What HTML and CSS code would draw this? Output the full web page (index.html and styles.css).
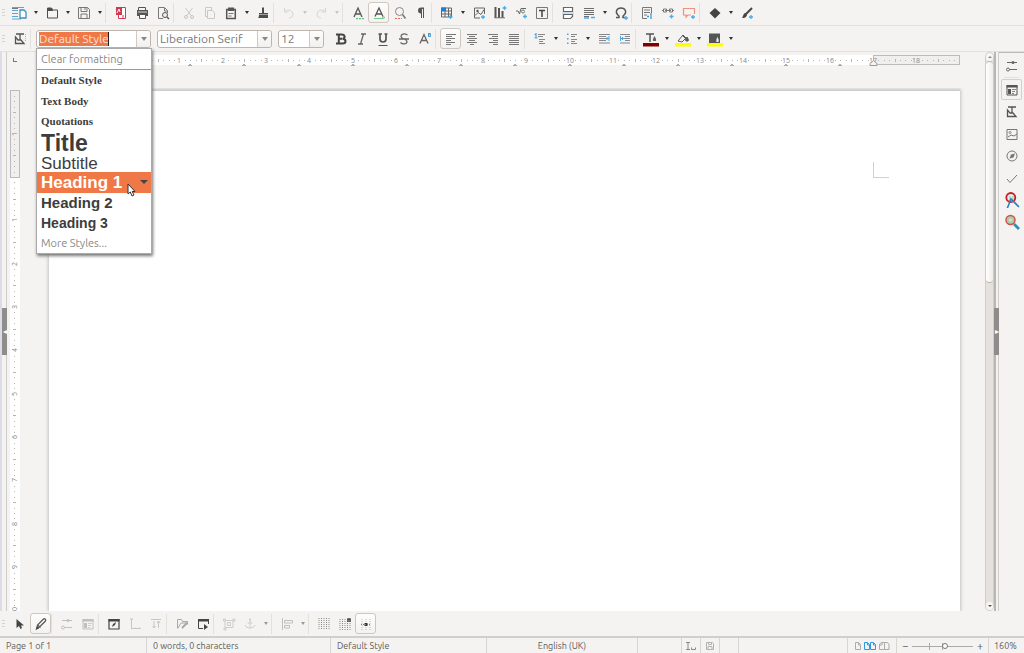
FILE: index.html
```html
<!DOCTYPE html>
<html lang="en">
<head>
<meta charset="utf-8">
<title>Untitled 1 - Writer</title>
<link rel="stylesheet" href="styles.css">
</head>
<body>
<svg class="defs" aria-hidden="true">
  <symbol id="new" viewBox="0 0 16 16"><path d="M0 2.5h12M0 5.5h6M0 8.5h6M0 11.5h6M0 14h9" stroke="#5aa7cf" fill="none"/><path d="M0 3.5h6" stroke="#777"/><path d="M8 5h4l2 2v6H8z" fill="#fff" stroke="#3f8fbc" stroke-width="1.3"/></symbol>
  <symbol id="open" viewBox="0 0 16 16"><path d="M3.5 13V3h4l1 2h5v8z" fill="none" stroke="#4d4d4d"/><path d="M3 3h5l1 3H3z" fill="#4d4d4d"/></symbol>
  <symbol id="save" viewBox="0 0 16 16"><path d="M2.500 2.500h9l2 2v9h-11zM5 2.500v4h6v-4M5 13v-4h6v4M9 3v2" fill="none" stroke="#777"/></symbol>
  <symbol id="pdf" viewBox="0 0 16 16"><path d="M8 2.500h4.500v11h-7V10" fill="#fff" stroke="#d2385a"/><path d="M3 2h6v8H3z" fill="#d2384f"/><path d="M4 8l2-4 1 3" stroke="#fff" fill="none"/><path d="M10 10v3" stroke="#d2384f"/></symbol>
  <symbol id="print" viewBox="0 0 16 16"><path d="M4.500 5V2.500h7V5" fill="none" stroke="#555"/><path d="M3 5h11v6H3z" fill="#555"/><path d="M5.500 9.500h6v4h-6z" fill="#fff" stroke="#555"/><path d="M4 7h9" stroke="#ddd"/></symbol>
  <symbol id="preview" viewBox="0 0 16 16"><path d="M8 13.500H3.500v-11h6l3 3V8M9.500 3v3h3" fill="none" stroke="#777"/><circle cx="10" cy="10" r="2.500" fill="#eee" stroke="#555"/><path d="M12 12l2 2" stroke="#555" stroke-width="1.500"/></symbol>
  <symbol id="cut" viewBox="0 0 16 16"><path d="M4.500 3l6 8M11.500 3l-6 8" fill="none" stroke="#c9c7c5"/><circle cx="5" cy="12" r="1.500" fill="none" stroke="#c9c7c5"/><circle cx="11" cy="12" r="1.500" fill="none" stroke="#c9c7c5"/></symbol>
  <symbol id="copy" viewBox="0 0 16 16"><path d="M5 11.500H3.500v-9h6V5M5.500 5.500h5l2 2v6h-7z" fill="none" stroke="#cbc9c7"/></symbol>
  <symbol id="paste" viewBox="0 0 16 16"><path d="M3.700 4.500h8.600v9H3.700z" fill="none" stroke="#555" stroke-width="1.500"/><path d="M5 2.500h6V6H5z" fill="#555"/><path d="M5.500 8.500h5M5.500 11h3" stroke="#777"/></symbol>
  <symbol id="brush" viewBox="0 0 16 16"><path d="M7 2.500h2V8h4v5H3c1-1 1-2 1-5h3z" fill="#4d4d4d"/><path d="M4 9.500h9" stroke="#ddd" stroke-width=".6"/></symbol>
  <symbol id="undo" viewBox="0 0 16 16"><path d="M3.500 3v4h4M4 6.500c3-3 8-1 8 3 0 2-2 3.500-4 3.500" fill="none" stroke="#d6d4d2"/></symbol>
  <symbol id="redo" viewBox="0 0 16 16"><path d="M12.500 3v4h-4M12 6.500C9 3.500 4 5.500 4 9.500c0 2 2 3.500 4 3.500" fill="none" stroke="#d6d4d2"/></symbol>
  <symbol id="spell" viewBox="0 0 16 16"><path d="M4 12l4-9 4 9M5.500 9h5" fill="none" stroke="#555" stroke-width="1.300"/><path d="M6 13.700h8" stroke="#3db665" stroke-dasharray="2 1"/></symbol>
  <symbol id="autospell" viewBox="0 0 16 16"><path d="M4 11.500l4-8.500 4 8.500M5.500 9h5" fill="none" stroke="#555" stroke-width="1.300"/><path d="M3 13.500h8l1-2 2 1-2 1z" fill="none" stroke="#77c791"/></symbol>
  <symbol id="find" viewBox="0 0 16 16"><circle cx="7.500" cy="6.500" r="4" fill="none" stroke="#888"/><path d="M10.500 9.500l3 4" stroke="#777" stroke-width="1.500"/><path d="M3 13.500h7" stroke="#e66d60" stroke-dasharray="2 1"/></symbol>
  <symbol id="pilcrow" viewBox="0 0 16 16"><path d="M8 13V8.500a3 3 0 010-6h3V13h-1V4H9v9z" fill="#555"/></symbol>
  <symbol id="table" viewBox="0 0 16 16"><path d="M2.500 3h10v9h-10zM2.500 6h10M2.500 9h10M6 3v9M9.500 3v9" fill="none" stroke="#666"/><path d="M2 2.500h5V6H2z" fill="#1c7fd0"/><path d="M11.500 10v4M9.500 12h4" stroke="#4caceb" stroke-width="1.300"/></symbol>
  <symbol id="image" viewBox="0 0 16 16"><path d="M9 13H3.500V3h10v6M4 10.500l3-3 3 2 3-5" fill="none" stroke="#666"/><circle cx="6.500" cy="6" r="1.200" fill="#555"/><path d="M12 10v4M10 12h4" stroke="#4caceb" stroke-width="1.300"/></symbol>
  <symbol id="chart" viewBox="0 0 16 16"><path d="M3.500 2v11M7 3v10M10.500 6v7" fill="none" stroke="#555" stroke-width="2"/><path d="M2.500 12.800H13" stroke="#777"/><path d="M12.500 1v4M10.500 3h4" stroke="#4caceb" stroke-width="1.300"/></symbol>
  <symbol id="formula" viewBox="0 0 16 16"><path d="M3 6h2l1.500 3L8 3.500h5" fill="none" stroke="#666"/><circle cx="10" cy="6.500" r="1.500" fill="none" stroke="#777"/><path d="M12 9.500v4M10 11.500h4" stroke="#4caceb" stroke-width="1.300"/></symbol>
  <symbol id="textbox" viewBox="0 0 16 16"><path d="M2.500 2.500h11v11h-11z" fill="none" stroke="#777"/><path d="M5 5.500h6M8 5.500v6.500" stroke="#444" stroke-width="1.500"/></symbol>
  <symbol id="break" viewBox="0 0 16 16"><path d="M3.500 2.500h9v4h-9zM3.500 9.500h9v2l-2 2h-7z" fill="#fff" stroke="#666" stroke-width="1.200"/><path d="M2 8h12" stroke="#9dccE9"/></symbol>
  <symbol id="field" viewBox="0 0 16 16"><path d="M3 3.500h10M3 5.500h10M3 7.500h10M3 9.500h10M3 11.500h5" stroke="#6d6d6d"/><path d="M3 13h5M10 12.500h4" stroke="#4caceb" stroke-width="1.300"/></symbol>
  <symbol id="omega" viewBox="0 0 16 16"><path d="M3 12.500h3V11C1 7 4 3 8 3s7 4 2 8v1.500h2" fill="none" stroke="#555" stroke-width="1.500"/><path d="M13 11v4M11 13h4" stroke="#4caceb" stroke-width="1.300"/></symbol>
  <symbol id="footnote" viewBox="0 0 16 16"><path d="M8 13.500H3.500v-11h9V8M5 5h6M5 7.500h6M5 10h3" fill="none" stroke="#777"/><path d="M8 11.500h2M12 8v6" stroke="#3998df" stroke-width="1.300"/></symbol>
  <symbol id="link" viewBox="0 0 16 16"><path d="M3.500 4h3v3h-3zM9.500 4h3v3h-3zM5 5.500h6M2 5.500h1M13 5.500h1" fill="none" stroke="#777"/><path d="M11.500 9.500v4M9.500 11.500h4" stroke="#4caceb" stroke-width="1.300"/></symbol>
  <symbol id="comment" viewBox="0 0 16 16"><path d="M13.500 9V3.500h-11v6.500H5v2l2-2h3" fill="none" stroke="#ee927a" stroke-width="1.200"/><path d="M12 10v4M10 12h4" stroke="#4caceb" stroke-width="1.300"/></symbol>
  <symbol id="diamond" viewBox="0 0 16 16"><path d="M8 3l5.500 5L8 13.500 2.500 8z" fill="#444"/></symbol>
  <symbol id="draw" viewBox="0 0 16 16"><path d="M6 10l7-7" stroke="#444" stroke-width="2"/><path d="M6 8l2 2c-1 3-3 3-5 3 1-1 1-4 3-5z" fill="#444"/><path d="M12 10v4M10 12h4" stroke="#4caceb" stroke-width="1.300"/></symbol>
  <symbol id="styles" viewBox="0 0 16 16"><path d="M4 3h8M8 3v6M3.500 6v6.500h8.500L9 9H6z" fill="none" stroke="#555" stroke-width="1.300"/></symbol>
  <symbol id="dots" viewBox="0 0 16 16"><path d="M13.500 3v7" stroke="#f0a08a" stroke-dasharray="1 1"/></symbol>
  <symbol id="bold" viewBox="0 0 16 16"><path d="M3 3.500h5.500c4 0 4 4 1 4.200 4 .3 4 4.800 0 4.800H3M5.800 3.500v9M6 7.700h3" fill="none" stroke="#444" stroke-width="2"/></symbol>
  <symbol id="italic" viewBox="0 0 16 16"><path d="M7 3h5M4 13h5M9.500 3l-3 10" fill="none" stroke="#666" stroke-width="1.300"/></symbol>
  <symbol id="underline" viewBox="0 0 16 16"><path d="M3.500 3H7M9.500 3h3M5 3v5c0 4 6 4 6 0V3" fill="none" stroke="#555" stroke-width="1.700"/><path d="M3.500 14.500h9" stroke="#555"/></symbol>
  <symbol id="strike" viewBox="0 0 16 16"><path d="M11.500 4C8 2 5 3 5 5.500S11 8 11 10.500 7 14 4.500 11.500M3 8h10" fill="none" stroke="#666" stroke-width="1.300"/></symbol>
  <symbol id="super" viewBox="0 0 16 16"><path d="M3 12.500l4-9 4 9M4.500 9.500h5" fill="none" stroke="#666" stroke-width="1.300"/><path d="M11.500 2v4M11.500 2.500h2v1.300h-2M11.500 5.500h2V4" fill="none" stroke="#4a9ddd"/></symbol>
  <symbol id="left" viewBox="0 0 16 16"><path d="M3 3.500h10M3 5.500h6M3 7.500h9M3 9.500h5M3 11.500h9M3 13.500h5" stroke="#777"/></symbol>
  <symbol id="center" viewBox="0 0 16 16"><path d="M3 3.500h10M5 5.500h6M3 7.500h10M5 9.500h6M3 11.500h10M6 13.500h4" stroke="#777"/></symbol>
  <symbol id="right" viewBox="0 0 16 16"><path d="M3 3.500h10M7 5.500h6M4 7.500h9M8 9.500h5M4 11.500h9M8 13.500h5" stroke="#777"/></symbol>
  <symbol id="justify" viewBox="0 0 16 16"><path d="M3 3.500h10M3 5.500h10M3 7.500h10M3 9.500h10M3 11.500h10M3 13.500h10" stroke="#777"/></symbol>
  <symbol id="numbers" viewBox="0 0 16 16"><path d="M6 3.500h7M6 5.500h5M7 8.500h6M7 10.500h4M7 12.500h6" stroke="#888"/><path d="M4 2v5M2.500 3.500H4M2.500 7h3" stroke="#4ca3df" stroke-width="1.200" fill="none"/></symbol>
  <symbol id="bullets" viewBox="0 0 16 16"><path d="M7 3.500h6M7 5.500h4M7 8.500h6M7 10.500h4M7 12.500h6" stroke="#888"/><path d="M3 2.500h1.500v1.500H3zM3 7h1.500v1.500H3zM3 11.500h1.500v1.500H3z" fill="#4ca3df"/></symbol>
  <symbol id="indent" viewBox="0 0 16 16"><path d="M3 3.500h11M3 5.500h7M3 7.500h6M3 9.500h7M3 12h11" stroke="#888"/><path d="M13 5v5M9 7.500h4M11 6v3" stroke="#4ca3df"/></symbol>
  <symbol id="outdent" viewBox="0 0 16 16"><path d="M3 3.500h10M8 5.500h5M8 7.500h5M8 9.500h5M3 12h10" stroke="#888"/><path d="M3.500 5v5M4 7.500h4M5.500 6v3" stroke="#4ca3df"/></symbol>
  <symbol id="fontcolor" viewBox="0 0 16 16"><path d="M3 3h8M7 3v8" stroke="#555" stroke-width="1.500"/><path d="M11.500 5c1 2 2 3 1.500 5h-3c-.5-2 .5-3 1.500-5z" fill="#666"/><path d="M0 12h16v3.500H0z" fill="#800000"/></symbol>
  <symbol id="highlight" viewBox="0 0 16 16"><path d="M3 10l5-6 3 3-4 4z" fill="none" stroke="#555"/><path d="M7 4l4 4M12 6c1 2 2 3 1 4h-2c-1-1 0-2 1-4z" fill="#555" stroke="#555"/><path d="M0 12h16v3.500H0z" fill="#ff0"/></symbol>
  <symbol id="parabg" viewBox="0 0 16 16"><path d="M2 2.500h11V12H2z" fill="#555"/><path d="M10.500 6c1 2 1.500 3 1 5h-2c-.5-2 0-3 1-5z" fill="#eee"/><path d="M0 12h16v3.500H0z" fill="#ff0"/></symbol>
  <symbol id="cursor" viewBox="0 0 16 16"><path d="M4.500 3v9l2.500-2 1.500 3 1.500-1-1-2.500h3z" fill="#444"/></symbol>
  <symbol id="pencil" viewBox="0 0 16 16"><path d="M3.500 13l1-4 6-6c1-1 3 1 2 2l-6 6zM4.500 9l3 2.500" fill="none" stroke="#555" stroke-width="1.200"/><path d="M3 13.500l3-1-2-2z" fill="#444"/></symbol>
  <symbol id="properties" viewBox="0 0 16 16"><path d="M3 4.500h10M3 11.500h10" stroke="currentColor"/><circle cx="9" cy="4.500" r="1.500" fill="currentColor"/><circle cx="4" cy="11.500" r="1.500" fill="#f4f3f1" stroke="currentColor"/></symbol>
  <symbol id="panel" viewBox="0 0 16 16"><path d="M3 3.500h10v9.500H3z" fill="none" stroke="currentColor"/><path d="M2.500 3h11v2.500h-11zM4 7h3v5H4z" fill="currentColor"/><path d="M8 7.500h4M8 9.500h3M8 11.500h2" stroke="currentColor" stroke-width=".7"/></symbol>
  <symbol id="wizard" viewBox="0 0 16 16"><path d="M3 3.500h10v9.500H3z" fill="none" stroke="#444" stroke-width="1.200"/><path d="M2.500 3h11v2.500h-11zM6 11l1-3 3-2-1 3z" fill="#444"/></symbol>
  <symbol id="label" viewBox="0 0 16 16"><path d="M4.500 3v9.500M3 3h3M4 12.500h10M8 12.500v-1M12 12.500v-1" fill="none" stroke="#c8c6c4"/></symbol>
  <symbol id="order" viewBox="0 0 16 16"><path d="M3 3.500h10M6 5v7M10.500 5v7M4.500 10L6 12l1.500-2M9 7l1.500-2L12 7" fill="none" stroke="#c8c6c4"/></symbol>
  <symbol id="opendes" viewBox="0 0 16 16"><path d="M3.500 12.500v-9h4l1 2h5v3M4 12l3-5h6" fill="none" stroke="#aaa8a6"/><path d="M8 12l5-5" stroke="#aaa8a6" stroke-width="2"/></symbol>
  <symbol id="focus" viewBox="0 0 16 16"><path d="M8 12.500H3.500v-9h10V8" fill="none" stroke="#444"/><path d="M3 3h11v2.500H3zM9 8l4 3-4 3z" fill="#444"/></symbol>
  <symbol id="group" viewBox="0 0 16 16"><path d="M4 4.500h8v7H4zM6.500 6.500h3v3h-3zM2.500 3h2v2h-2zM12 3h2v2h-2zM3 12h2v2H3z" fill="none" stroke="#cfcdcb"/></symbol>
  <symbol id="anchor" viewBox="0 0 16 16"><path d="M8 4v8M3 9c1 4 9 4 10 0M5.500 7h5" fill="none" stroke="#cfcdcb"/><circle cx="8" cy="3.500" r="1" fill="#c8c6c4"/></symbol>
  <symbol id="align" viewBox="0 0 16 16"><path d="M3.500 2v12M5.500 4.500h8v2.500h-8zM5.500 9.500h5V12h-5z" fill="none" stroke="#c2c0be"/></symbol>
  <symbol id="grid" viewBox="0 0 16 16"><path d="M3 2v12M5.500 2v12M8 2v12M10.500 2v12M13 2v12" stroke="#888" stroke-dasharray="1 1"/></symbol>
  <symbol id="snap" viewBox="0 0 16 16"><path d="M3 3v11M5.500 3v11M8 3v11M10.500 3v11M13 3v11" stroke="#888" stroke-dasharray="1 1"/><path d="M11 6V3h2v3" stroke="#444" fill="none" stroke-width="1.500"/></symbol>
  <symbol id="guides" viewBox="0 0 16 16"><path d="M4 3v11M8 3v11M12 3v11" stroke="#bbb" stroke-dasharray="1 1"/><path d="M6.500 7h3v3h-3z" fill="#333"/><path d="M3 8.500h10" stroke="#777" stroke-dasharray="1 1"/></symbol>
  <symbol id="gallery" viewBox="0 0 16 16"><path d="M3 3.500h10v10H3zM4 11l3-2 3 1 3-2" fill="none" stroke="#777"/><circle cx="6" cy="6.500" r="1" fill="none" stroke="#888"/></symbol>
  <symbol id="compass" viewBox="0 0 16 16"><circle cx="8" cy="8" r="5" fill="none" stroke="#777"/><path d="M5.500 10.500l1.500-4 4-1-1.500 4z" fill="#777"/></symbol>
  <symbol id="check" viewBox="0 0 16 16"><path d="M3 9l3 3.500L13 5" fill="none" stroke="#777"/></symbol>
  <symbol id="lt" viewBox="0 0 16 16"><circle cx="6.800" cy="5.500" r="4.500" fill="#e5eee3" stroke="#c91c27" stroke-width="1.800"/><path d="M6 4v5h3V4" fill="none" stroke="#90c7a6"/><path d="M3 17l4-10 8 8" fill="none" stroke="#2583bd" stroke-width="1.600"/></symbol>
  <symbol id="lens" viewBox="0 0 16 16"><circle cx="6.500" cy="6" r="4.500" fill="#a9cbb4" stroke="#cf5349" stroke-width="1.500"/><circle cx="6.500" cy="6" r="1.600" fill="#f2d9a5"/><path d="M10 10l5 5" stroke="#318eb9" stroke-width="2.700"/></symbol>
</svg>

<header>
  <div class="toolbar" role="toolbar" aria-label="Standard">
    <span class="grip"></span>
    <button aria-label="New"><svg><use href="#new"/></svg></button><button class="drop" aria-label="New options"></button>
    <button aria-label="Open"><svg><use href="#open"/></svg></button><button class="drop" aria-label="Open options"></button>
    <button aria-label="Save"><svg><use href="#save"/></svg></button><button class="drop" aria-label="Save options"></button>
    <i class="sep"></i>
    <button aria-label="Export as PDF"><svg><use href="#pdf"/></svg></button>
    <button aria-label="Print"><svg><use href="#print"/></svg></button>
    <button aria-label="Print preview"><svg><use href="#preview"/></svg></button>
    <i class="sep"></i>
    <button aria-label="Cut" disabled><svg><use href="#cut"/></svg></button>
    <button aria-label="Copy" disabled><svg><use href="#copy"/></svg></button>
    <button aria-label="Paste"><svg><use href="#paste"/></svg></button><button class="drop" aria-label="Paste options"></button>
    <button aria-label="Clone formatting"><svg><use href="#brush"/></svg></button>
    <i class="sep"></i>
    <button aria-label="Undo" disabled><svg><use href="#undo"/></svg></button><button class="drop" aria-label="Undo list" disabled></button>
    <button aria-label="Redo" disabled><svg><use href="#redo"/></svg></button><button class="drop" aria-label="Redo list" disabled></button>
    <i class="sep"></i>
    <button aria-label="Spelling"><svg><use href="#spell"/></svg></button>
    <button class="on" aria-label="Automatic spell checking" aria-pressed="true"><svg><use href="#autospell"/></svg></button>
    <button aria-label="Find and replace"><svg><use href="#find"/></svg></button>
    <button aria-label="Formatting marks"><svg><use href="#pilcrow"/></svg></button>
    <i class="sep"></i>
    <button aria-label="Table"><svg><use href="#table"/></svg></button><button class="drop" aria-label="Table size"></button>
    <button aria-label="Image"><svg><use href="#image"/></svg></button>
    <button aria-label="Chart"><svg><use href="#chart"/></svg></button>
    <button aria-label="Formula"><svg><use href="#formula"/></svg></button>
    <button aria-label="Text box"><svg><use href="#textbox"/></svg></button>
    <i class="sep"></i>
    <button aria-label="Page break"><svg><use href="#break"/></svg></button>
    <button aria-label="Field"><svg><use href="#field"/></svg></button><button class="drop" aria-label="Field options"></button>
    <button aria-label="Special character"><svg><use href="#omega"/></svg></button>
    <i class="sep"></i>
    <button aria-label="Footnote"><svg><use href="#footnote"/></svg></button>
    <button aria-label="Hyperlink"><svg><use href="#link"/></svg></button>
    <button aria-label="Comment"><svg><use href="#comment"/></svg></button>
    <i class="sep"></i>
    <button aria-label="Basic shapes"><svg><use href="#diamond"/></svg></button><button class="drop" aria-label="Shape options"></button>
    <button aria-label="Draw functions"><svg><use href="#draw"/></svg></button>
  </div>
  <div class="toolbar" role="toolbar" aria-label="Formatting">
    <span class="grip"></span>
    <button aria-label="Styles"><svg><use href="#styles"/><use href="#dots"/></svg></button>
    <i class="sep"></i>
    <div class="combo style-combo">
      <span class="field"><input class="picked" aria-label="Paragraph style" value="Default Style"></span>
      <button class="arrow" aria-label="Show styles"></button>
      <div class="menu" role="listbox" aria-label="Paragraph styles">
        <button class="plain clear" role="option">Clear formatting</button>
        <button class="serif" role="option">Default Style</button>
        <button class="serif" role="option">Text Body</button>
        <button class="serif" role="option">Quotations</button>
        <button class="title" role="option">Title</button>
        <button class="subtitle" role="option">Subtitle</button>
        <button class="h1" role="option" aria-selected="true">Heading 1</button>
        <button class="h2" role="option">Heading 2</button>
        <button class="h3" role="option">Heading 3</button>
        <button class="plain" role="option">More Styles...</button>
        <svg class="pointer" viewBox="0 0 9 14"><path d="M1 1v10l2.300-2L5 13l2-1-1.800-3.500H8z" fill="#fff" stroke="#333"/></svg>
      </div>
    </div>
    <div class="combo font-combo">
      <span class="field"><input aria-label="Font name" value="Liberation Serif"></span>
      <button class="arrow" aria-label="Show fonts"></button>
    </div>
    <div class="combo size-combo">
      <span class="field"><input aria-label="Font size" value="12"></span>
      <button class="arrow" aria-label="Show sizes"></button>
    </div>
    <button aria-label="Bold"><svg><use href="#bold"/></svg></button>
    <button aria-label="Italic"><svg><use href="#italic"/></svg></button>
    <button aria-label="Underline"><svg><use href="#underline"/></svg></button>
    <button aria-label="Strikethrough"><svg><use href="#strike"/></svg></button>
    <button aria-label="Superscript"><svg><use href="#super"/></svg></button>
    <i class="sep"></i>
    <button class="on" aria-label="Align left" aria-pressed="true"><svg><use href="#left"/></svg></button>
    <button aria-label="Centre"><svg><use href="#center"/></svg></button>
    <button aria-label="Align right"><svg><use href="#right"/></svg></button>
    <button aria-label="Justify"><svg><use href="#justify"/></svg></button>
    <i class="sep"></i>
    <button aria-label="Numbering"><svg><use href="#numbers"/></svg></button><button class="drop" aria-label="Numbering options"></button>
    <button aria-label="Bullets"><svg><use href="#bullets"/></svg></button><button class="drop" aria-label="Bullet options"></button>
    <button aria-label="Increase indent"><svg><use href="#indent"/></svg></button>
    <button aria-label="Decrease indent"><svg><use href="#outdent"/></svg></button>
    <i class="sep"></i>
    <button aria-label="Font colour"><svg><use href="#fontcolor"/></svg></button><button class="drop" aria-label="Font colours"></button>
    <button aria-label="Highlighting"><svg><use href="#highlight"/></svg></button><button class="drop" aria-label="Highlighting colours"></button>
    <button aria-label="Paragraph background"><svg><use href="#parabg"/></svg></button><button class="drop" aria-label="Background colours"></button>
  </div>
</header>

<main>
  <div class="splitter left"><button class="handle" aria-label="Show left panel">◂</button></div>
  <div class="vruler-col">
    <span class="tabmark"></span>
    <svg class="vruler" id="vruler" aria-hidden="true"></svg>
  </div>
  <section class="canvas">
    <svg class="hruler" id="hruler" aria-hidden="true"></svg>
    <article class="page" contenteditable="true" aria-label="Document"><span class="corner"></span></article>
  </section>
  <div class="scroll">
    <button class="up" aria-label="Scroll up"></button>
    <div class="track"><div class="thumb"></div></div>
    <button class="down" aria-label="Scroll down"></button>
  </div>
  <div class="splitter right"><button class="handle" aria-label="Hide sidebar">▸</button></div>
  <nav class="sidebar" aria-label="Sidebar">
    <button aria-label="Sidebar settings"><svg><use href="#properties"/></svg></button>
    <hr>
    <button class="on" aria-label="Properties"><svg><use href="#panel"/></svg></button>
    <button aria-label="Styles"><svg><use href="#styles"/></svg></button>
    <button aria-label="Gallery"><svg><use href="#gallery"/></svg></button>
    <button aria-label="Navigator"><svg><use href="#compass"/></svg></button>
    <button aria-label="Check"><svg><use href="#check"/></svg></button>
    <button aria-label="Proofreading"><svg><use href="#lt"/></svg></button>
    <button aria-label="Search"><svg><use href="#lens"/></svg></button>
  </nav>
</main>

<footer>
  <div class="toolbar forms" role="toolbar" aria-label="Form design">
    <span class="grip"></span>
    <button aria-label="Select"><svg><use href="#cursor"/></svg></button>
    <button class="on" aria-label="Design mode" aria-pressed="true"><svg><use href="#pencil"/></svg></button>
    <i class="sep"></i>
    <button class="dim" aria-label="Control properties" disabled><svg><use href="#properties"/></svg></button>
    <button class="dim" aria-label="Form properties" disabled><svg><use href="#panel"/></svg></button>
    <i class="sep"></i>
    <button aria-label="Form navigator"><svg><use href="#wizard"/></svg></button>
    <button aria-label="Add field" disabled><svg><use href="#label"/></svg></button>
    <button aria-label="Activation order" disabled><svg><use href="#order"/></svg></button>
    <i class="sep"></i>
    <button aria-label="Open in design mode"><svg><use href="#opendes"/></svg></button>
    <button aria-label="Automatic control focus"><svg><use href="#focus"/></svg></button>
    <i class="sep"></i>
    <button aria-label="Position and size" disabled><svg><use href="#group"/></svg></button>
    <button aria-label="Anchor" disabled><svg><use href="#anchor"/></svg></button><button class="drop mid" aria-label="Anchor options" disabled></button>
    <i class="sep"></i>
    <button aria-label="Align objects" disabled><svg><use href="#align"/></svg></button><button class="drop mid" aria-label="Align options" disabled></button>
    <i class="sep"></i>
    <button aria-label="Display grid"><svg><use href="#grid"/></svg></button>
    <button aria-label="Snap to grid"><svg><use href="#snap"/></svg></button>
    <button class="on" aria-label="Helplines" aria-pressed="true"><svg><use href="#guides"/></svg></button>
  </div>
  <div class="status">
    <span>Page 1 of 1</span>
    <span>0 words, 0 characters</span>
    <span>Default Style</span>
    <span class="mid-text">English (UK)</span>
    <span></span>
    <span class="icon"><svg class="insert" viewBox="0 0 10 8"><path d="M0 .5h4M0 7.500h4M2 .5v7M5.500 5.500v2h4v-2" fill="none" stroke="#888"/></svg></span>
    <span class="icon"><svg class="disk" viewBox="0 0 8 8"><path d="M.5.500h6l1 1v6h-7zM2.500.500v2h3v-2M2 7.500v-3h4v3" fill="none" stroke="#b5b3b1"/></svg></span>
    <span></span>
    <span></span>
    <span class="icon"><svg class="views" viewBox="0 0 36 8"><g fill="none" stroke="#aaa"><path d="M1.500.500h3l2 2v5h-5zM4.500 1v2h2"/><path d="M10.500.500h3l2 2v5h-5zM13.500 1v2h2M16.500.500h3l2 2v5h-5zM19.500 1v2h2" stroke="#2b9be5"/><path d="M25.500 7.500V2l2-1.500h3v7zM30.500.500h3l1.500 2v5h-4.500M28 1v2h-2"/></g></svg></span>
    <span class="zoom"><button aria-label="Zoom out">−</button><input type="range" aria-label="Zoom" min="0" max="100" value="55"><button aria-label="Zoom in">+</button></span>
    <span>160%</span>
  </div>
</footer>
<script src="rulers.js"></script>
</body>
</html>
```
FILE: styles.css
```css
* { box-sizing: border-box; }

:root {
  --bg: #f4f3f1;
  --line: #e3e1de;
  --accent: #f07746;
  --ui: Ubuntu, "Open Sans", "Noto Sans", sans-serif;
}

html, body { height: 100%; }

body {
  margin: 0;
  display: flex;
  flex-direction: column;
  overflow: hidden;
  background: var(--bg);
  color: #666;
  font: 11px/16px var(--ui);
}

button, input {
  margin: 0;
  padding: 0;
  border: 0;
  background: none;
  color: inherit;
  font: inherit;
}

.defs { display: none; }

/* Toolbars */
.toolbar {
  display: flex;
  align-items: center;
  height: 26px;
  border-bottom: 1px solid var(--line);
}

.toolbar > button, .sidebar button {
  flex: none;
  width: 21px;
  height: 21px;
  display: grid;
  place-items: center;
  color: #666;
}
.toolbar > button > svg, .sidebar svg { width: 16px; height: 16px; overflow: visible; }
.toolbar > button.on {
  border: 1px solid #cdc7c0;
  border-radius: 3px;
  background: linear-gradient(#fdfdfc, #f4f2f0);
}
.toolbar > button.dim { color: #c2c0be; }
.toolbar > .drop { width: 11px; }
.drop::after {
  content: "";
  border: 2px solid transparent;
  border-top: 3px solid #333;
  border-bottom: 0;
}
.drop:disabled::after { border-top-color: #c6c4c2; }
.drop.mid:disabled::after { border-top-color: #999; }

.grip {
  flex: none;
  width: 3px;
  height: 8px;
  margin: 0 4px 0 2px;
  background: repeating-linear-gradient(#d5d3d0 0 1px, transparent 1px 3px);
}
.sep { flex: none; width: 5px; height: 20px; border-left: 1px solid var(--line); }

/* Combo boxes */
.combo {
  position: relative;
  flex: none;
  display: flex;
  height: 18px;
  border: 1px solid #bdb5ac;
  border-radius: 3px;
  background: #fff;
  font-size: 12px;
  color: #777;
}
.field { flex: 1; min-width: 0; display: flex; align-items: center; padding: 0 2px; }
.field input { width: 100%; height: 14px; }
.field .picked {
  width: 70px;
  background: var(--accent);
  color: #fbe3d8;
  border-right: 1px solid #222;
}
.style-combo, .font-combo { width: 115px; margin-right: 6px; }
.style-combo { margin-left: 1px; }
.size-combo { width: 46px; margin-right: 6px; }
.arrow {
  width: 14px;
  display: grid;
  place-items: center;
  border-left: 1px solid #d0cac3;
  background: linear-gradient(#fdfdfc, #f2f0ee);
  border-radius: 0 3px 3px 0;
}
.arrow::after {
  content: "";
  border: 3px solid transparent;
  border-top: 4px solid #888;
  border-bottom: 0;
}

/* Style list */
.menu {
  position: absolute;
  z-index: 5;
  top: 17px;
  left: -1px;
  width: 116px;
  display: flex;
  flex-direction: column;
  border: 1px solid #aaa;
  background: #fff;
  box-shadow: 1px 2px 3px #777;
}
.menu button {
  height: 21px;
  padding: 0 4px;
  line-height: 20px;
  text-align: left;
  white-space: nowrap;
  color: #3d3d3d;
}
.menu .plain { height: 20px; font-size: 11px; line-height: 20px; color: #888; }
.menu .clear { height: 21px; line-height: 21px; border-bottom: 1px solid #999; }
.menu .serif { height: 21px; font: bold 11px/20px "Liberation Serif", serif; }
.menu .serif + .serif { height: 20px; }
.menu .title { height: 24px; font: bold 23px/24px "Liberation Sans", sans-serif; }
.menu .subtitle { height: 17px; font: 17px/17px "Liberation Sans", sans-serif; }
.menu .h1 {
  height: 21px;
  display: flex;
  justify-content: space-between;
  align-items: center;
  padding-right: 3px;
  background: var(--accent);
  color: #fff;
  font: bold 17px/21px "Liberation Sans", sans-serif;
}
.menu .h1::after {
  content: "";
  border: 4px solid transparent;
  border-top: 4px solid #444;
  border-bottom: 0;
}
.menu .h2 { height: 20px; font: bold 15px/20px "Liberation Sans", sans-serif; }
.menu .h3 { height: 20px; font: bold 14px/20px "Liberation Sans", sans-serif; }
.pointer { position: absolute; left: 90px; top: 134px; width: 9px; height: 14px; }

/* Work area */
main { flex: 1; min-height: 0; display: flex; }

.splitter { flex: none; display: flex; align-items: center; }
.splitter.left {
  width: 7px;
  border-left: 2px solid #dcdce8;
  border-right: 1px solid #cfcdca;
}
.splitter.right {
  width: 5px;
  border-left: 2px solid #b9b7b4;
  border-right: 1px solid #cfcdca;
}
.handle {
  flex: none;
  width: 5px;
  height: 47px;
  background: #8e8d8b;
  color: #fff;
  font-size: 8px;
  line-height: 47px;
  text-align: center;
  overflow: hidden;
}
.splitter.right .handle { margin-left: -2px; }

.vruler-col { flex: none; width: 13px; padding: 6px 0 0 3px; display: flex; flex-direction: column; }
.tabmark {
  flex: none;
  width: 4px;
  height: 4px;
  margin: 0 0 28px 3px;
  border: 1px solid #777;
  border-top: 0;
  border-right: 0;
}
.vruler { flex: 1; width: 10px; min-height: 0; }

.canvas {
  flex: 1;
  min-width: 0;
  padding: 3px 25px 0 29px;
  display: flex;
  flex-direction: column;
}
.hruler { flex: none; width: 100%; height: 12px; margin-bottom: 23px; }
.page {
  flex: 1;
  display: flex;
  justify-content: flex-end;
  padding: 71px 71px 0 0;
  border-top: 1px solid #ccc;
  background: #fff;
  box-shadow: 0 0 3px 1px #c4c3c1;
  outline: 0;
  clip-path: inset(-2px -4px 0 -4px);
}
.corner { width: 16px; height: 16px; border: 1px solid #d0d0d0; border-top: 0; border-right: 0; }

.scroll {
  flex: none;
  width: 9px;
  display: flex;
  flex-direction: column;
  border: 1px solid #d0ccc6;
  border-radius: 5px;
  background: #e5e1dc;
}
.scroll button { height: 8px; display: grid; place-items: center; background: #f7f6f4; border-radius: 4px; }
.up::after, .down::after { content: ""; border: 2px solid transparent; }
.up::after { border-bottom: 2px solid #888; border-top: 0; }
.down::after { border-top: 2px solid #555; border-bottom: 0; }
.track { flex: 1; }
.thumb {
  height: 41%;
  border: 1px solid #bcb6ae;
  border-width: 1px 0;
  border-radius: 4px;
  background: linear-gradient(90deg, #fff, #efedea);
}

.sidebar {
  flex: none;
  width: 25px;
  display: flex;
  flex-direction: column;
  align-items: center;
  gap: 1px;
  padding-top: 2px;
  border-top: 1px solid #bbb9b6;
}
.sidebar .on { border: 1px solid #d3d0cc; border-radius: 2px; color: #555; }
.sidebar hr { width: 15px; margin: 0; border: 0; border-top: 1px solid var(--line); }

/* Bottom bars */
.forms { border-bottom: 2px solid #d0cfcd; height: 27px; }
.status {
  display: grid;
  grid-template-columns: 147fr 184fr 156fr 151fr 44px 19px 19px 19px 109px 49px 92px 35px;
  height: 15px;
  font: 9px/16px var(--ui);
  color: #5c5c5c;
}
.status > span {
  padding-left: 6px;
  border-right: 1px solid #d8d6d3;
  white-space: nowrap;
}
.status > span:last-child { border: 0; padding-left: 5px; }
.status .mid-text { padding: 0; text-align: center; }
.status .icon { padding: 0; display: flex; align-items: center; justify-content: center; }
.insert { width: 10px; height: 8px; }
.disk { width: 8px; height: 8px; }
.views { width: 36px; height: 8px; }
.status .zoom { display: flex; align-items: center; gap: 3px; padding: 0 4px; }
.zoom button { width: 8px; line-height: 14px; font-size: 11px; }
.zoom input {
  flex: 1;
  min-width: 0;
  height: 9px;
  appearance: none;
  background:
    linear-gradient(#aaa 0 0) 17px 1px / 1px 7px no-repeat,
    linear-gradient(#aaa 0 0) 30px 1px / 1px 7px no-repeat,
    linear-gradient(#aaa 0 0) 0 4px / 100% 1px no-repeat;
}
.zoom input::-webkit-slider-thumb {
  appearance: none;
  width: 6px;
  height: 6px;
  border: 1px solid #777;
  border-radius: 50%;
  background: #fff;
}

/* Rulers */
.r-body { fill: #fff; }
.r-margin { fill: #f0efed; stroke: #bbb; }
.r-tick { stroke: #b5b5b5; }
.r-num { fill: #888; font: 7px "Open Sans", sans-serif; text-anchor: middle; }
.r-tab { fill: #aaa; }
.r-indent { fill: #f4f3f1; stroke: #999; }
```
FILE: rulers.js
```js
const CM = 43.35;
const MARGIN = 87;

function add(svg, name, attrs, text) {
  const el = document.createElementNS("http://www.w3.org/2000/svg", name);
  for (const key in attrs) el.setAttribute(key, attrs[key]);
  if (text !== undefined) el.textContent = text;
  svg.appendChild(el);
}

// Ticks are spaced an eighth of a centimetre, with a numeral on each whole one.
function scale(svg, first, length, vertical) {
  for (let i = first; MARGIN + i * CM / 8 < length - 2; i++) {
    const p = Math.round(MARGIN + i * CM / 8);
    if (i % 8 === 0) {
      if (i === 0) continue;
      const n = Math.abs(i / 8);
      add(svg, "text", vertical
        ? { x: 0, y: 0, class: "r-num", transform: `translate(7 ${p}) rotate(-90)` }
        : { x: p, y: 8, class: "r-num" }, n);
      continue;
    }
    const half = i % 4 === 0 ? 1.5 : 0.5;
    add(svg, "line", vertical
      ? { x1: 4.5 - half, x2: 4.5 + half, y1: p + 0.5, y2: p + 0.5, class: "r-tick" }
      : { y1: 5.5 - half, y2: 5.5 + half, x1: p + 0.5, x2: p + 0.5, class: "r-tick" });
  }
}

function draw() {
  const h = document.getElementById("hruler");
  const v = document.getElementById("vruler");
  h.replaceChildren();
  v.replaceChildren();

  const w = h.clientWidth;
  const end = w - MARGIN;
  add(h, "rect", { x: 0, y: 0, width: w, height: 10, class: "r-body" });
  add(h, "rect", { x: 0.5, y: 0.5, width: MARGIN, height: 9, class: "r-margin" });
  add(h, "rect", { x: end + 0.5, y: 0.5, width: MARGIN - 1, height: 9, class: "r-margin" });
  scale(h, 1, w, false);
  for (let x = MARGIN + CM * 1.25; x < end - 5; x += CM * 1.25) {
    const p = Math.round(x);
    add(h, "path", { d: `M${p - 2} 11h4v-1h-1v-1h-2v1h-1z`, class: "r-tab" });
  }
  add(h, "path", { d: `M${end - 3} 10.500h7v-2l-3.500-3-3.500 3z`, class: "r-indent" });

  const len = v.clientHeight;
  add(v, "rect", { x: 0, y: 0, width: 10, height: len, class: "r-body" });
  add(v, "rect", { x: 0.5, y: 0.5, width: 9, height: MARGIN, class: "r-margin" });
  scale(v, -15, len + 4, true);
}

draw();
addEventListener("resize", draw);
```
